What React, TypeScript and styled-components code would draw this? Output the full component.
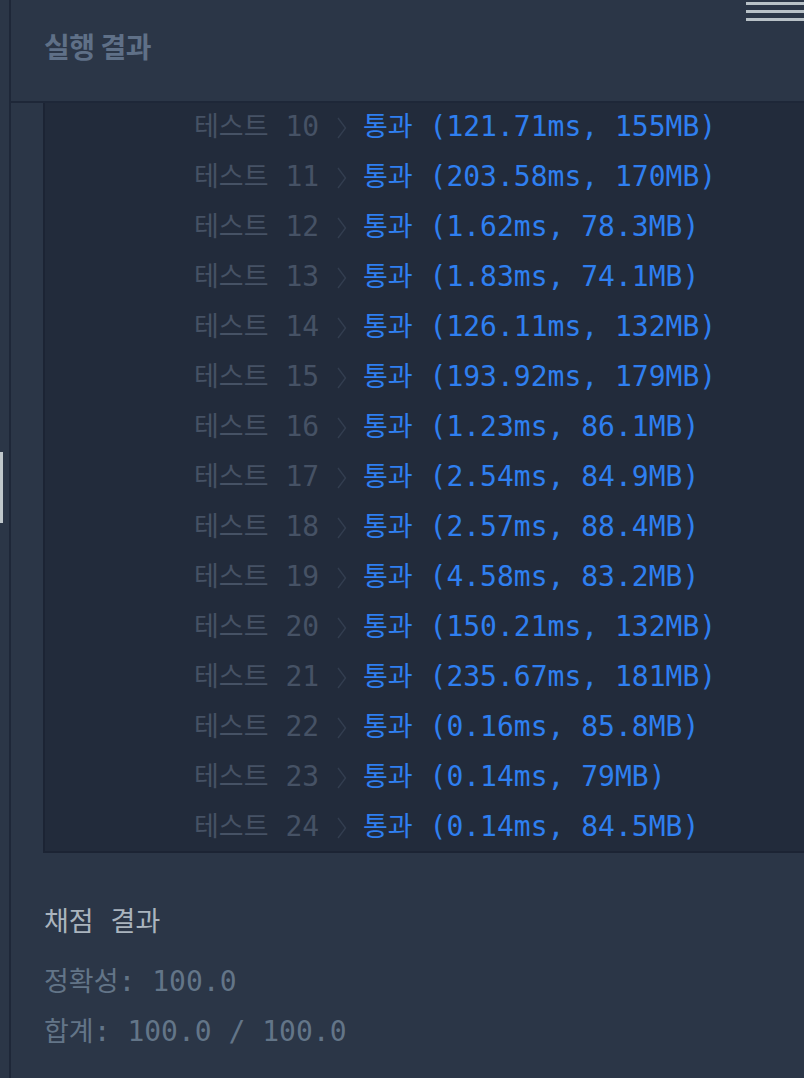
import React from "react";
import styled, { createGlobalStyle } from "styled-components";

const GlobalStyle = createGlobalStyle`
  html, body {
    margin: 0;
    padding: 0;
    background: #2b3647;
  }
  * {
    box-sizing: border-box;
  }
`;

type TestResult = {
	no: number;
	time: string;
	memory: string;
};

const results: TestResult[] = [
	{ no: 10, time: "121.71ms", memory: "155MB" },
	{ no: 11, time: "203.58ms", memory: "170MB" },
	{ no: 12, time: "1.62ms", memory: "78.3MB" },
	{ no: 13, time: "1.83ms", memory: "74.1MB" },
	{ no: 14, time: "126.11ms", memory: "132MB" },
	{ no: 15, time: "193.92ms", memory: "179MB" },
	{ no: 16, time: "1.23ms", memory: "86.1MB" },
	{ no: 17, time: "2.54ms", memory: "84.9MB" },
	{ no: 18, time: "2.57ms", memory: "88.4MB" },
	{ no: 19, time: "4.58ms", memory: "83.2MB" },
	{ no: 20, time: "150.21ms", memory: "132MB" },
	{ no: 21, time: "235.67ms", memory: "181MB" },
	{ no: 22, time: "0.16ms", memory: "85.8MB" },
	{ no: 23, time: "0.14ms", memory: "79MB" },
	{ no: 24, time: "0.14ms", memory: "84.5MB" },
];

const Page = styled.div`
  display: flex;
  height: 1078px;
  overflow: hidden;
  background: #2b3647;
`;

const Rail = styled.div`
  width: 11px;
  flex-shrink: 0;
  border-right: 2px solid #1e2738;
  display: flex;
  flex-direction: column;
  padding-top: 452px;
`;

const Grip = styled.div`
  width: 3px;
  height: 71px;
  background: #c0c8cc;
`;

const Main = styled.div`
  flex: 1;
  display: flex;
  flex-direction: column;
  min-width: 0;
`;

const Header = styled.div`
  height: 103px;
  display: flex;
  align-items: center;
  justify-content: space-between;
  padding-left: 33px;
  border-bottom: 2px solid #1e2738;
`;

const Title = styled.h2`
  margin: 0 0 10px 0;
  font-family: "Noto Sans CJK KR", sans-serif;
  font-weight: 700;
  font-size: 28px;
  letter-spacing: -0.5px;
  color: #5f7087;
`;

const Burger = styled.div`
  align-self: flex-start;
  width: 58px;
  display: flex;
  flex-direction: column;
  gap: 5px;
  padding-top: 2px;
`;

const BurgerLine = styled.span`
  display: block;
  height: 3px;
  background: #b8c1c7;
`;

const OutputWrap = styled.div`
  padding-left: 32px;
`;

const Output = styled.div`
  height: 750px;
  overflow: hidden;
  background: #222b3b;
  border-left: 2px solid #1c2434;
  border-bottom: 2px solid #1c2434;
`;

const List = styled.div`
  margin-top: -1px;
  padding-left: 149px;
  display: flex;
  flex-direction: column;
`;

const Mono = styled.div`
  font-family: "DejaVu Sans Mono", "Noto Sans CJK KR", monospace;
  font-size: 28px;
  line-height: 50px;
  height: 50px;
  white-space: pre;
`;

const Row = styled(Mono)`
  display: flex;
  align-items: center;
`;

const Hangul = styled.span`
  font-family: "Noto Sans CJK KR", sans-serif;
  font-size: 27px;
  line-height: 1;
`;

const Label = styled.span`
  color: #465265;
`;

const Pass = styled.span`
  color: #2f7ff0;
`;

const Chevron = styled.span`
  display: inline-flex;
  align-items: center;
  width: 27px;
  height: 50px;
  padding-left: 1px;
  padding-top: 2px;
`;

const Summary = styled.div`
  padding: 44px 0 0 33px;
  display: flex;
  flex-direction: column;
`;

const SummaryTitle = styled(Mono)`
  color: #aab4be;
  margin-bottom: 10px;
`;

const SummaryLine = styled(Mono)`
  color: #637588;
`;

const Arrow: React.FC = () => (
	<Chevron>
		<svg width="10" height="22" viewBox="0 0 10 22" fill="none">
			<path d="M1 1 L8.5 11 L1 21" stroke="#333e50" strokeWidth="1.4" />
		</svg>
	</Chevron>
);

const App: React.FC = () => {
	return (
		<Page>
			<GlobalStyle />
			<Rail>
				<Grip />
			</Rail>
			<Main>
				<Header>
					<Title>실행 결과</Title>
					<Burger>
						<BurgerLine />
						<BurgerLine />
						<BurgerLine />
					</Burger>
				</Header>
				<OutputWrap>
					<Output>
						<List>
							{results.map((r) => (
								<Row key={r.no}>
									<Label>
										<Hangul>테스트</Hangul> {r.no}{" "}
									</Label>
									<Arrow />
									<Pass>
										<Hangul>통과</Hangul> ({r.time}, {r.memory})
									</Pass>
								</Row>
							))}
						</List>
					</Output>
				</OutputWrap>
				<Summary>
					<SummaryTitle>
						<Hangul>채점</Hangul> <Hangul>결과</Hangul>
					</SummaryTitle>
					<SummaryLine>
						<Hangul>정확성</Hangul>: 100.0
					</SummaryLine>
					<SummaryLine>
						<Hangul>합계</Hangul>: 100.0 / 100.0
					</SummaryLine>
				</Summary>
			</Main>
		</Page>
	);
};

export default App;
